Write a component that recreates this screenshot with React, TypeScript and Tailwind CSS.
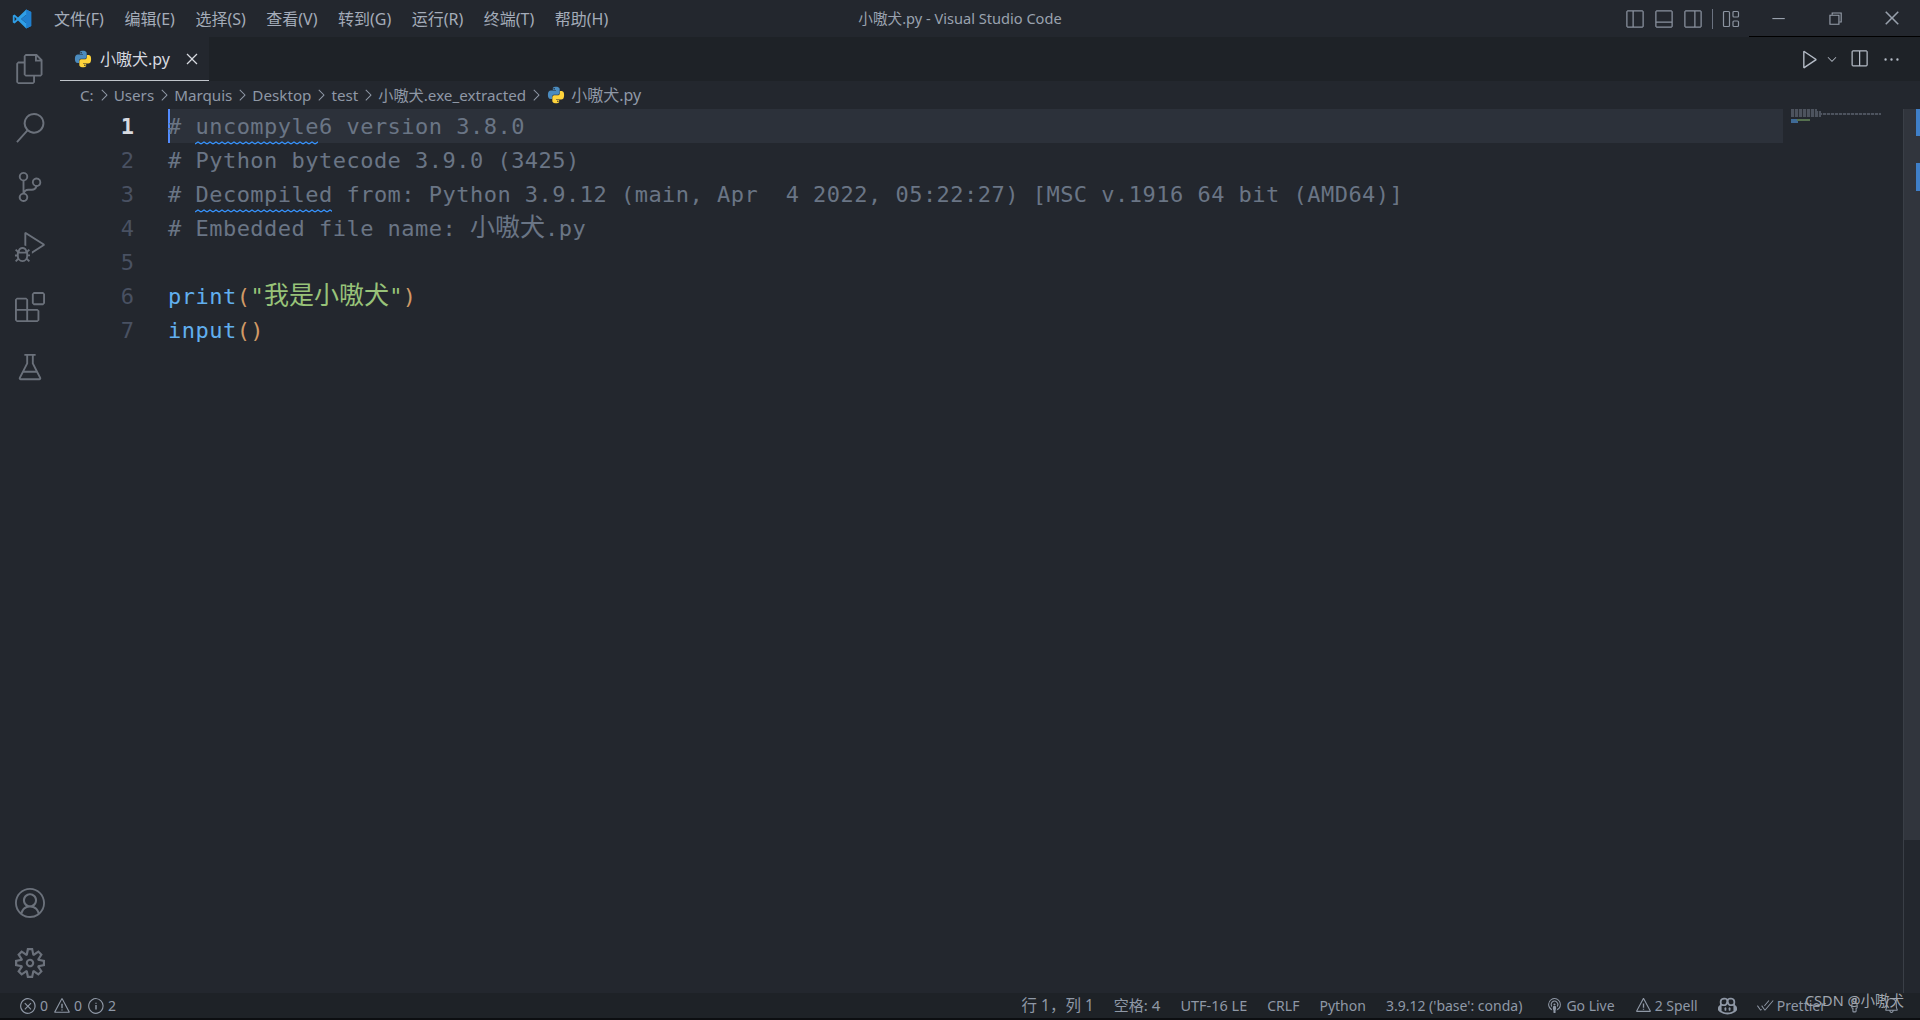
import React from "react";
import {
  VscAccount,
  VscBeaker,
  VscBell,
  VscBroadcast,
  VscCheckAll,
  VscChevronDown,
  VscChevronRight,
  VscChromeClose,
  VscChromeMinimize,
  VscChromeRestore,
  VscClose,
  VscCopilot,
  VscDebugAlt,
  VscEllipsis,
  VscError,
  VscExtensions,
  VscFiles,
  VscInfo,
  VscLayoutPanelOff,
  VscLayoutSidebarLeftOff,
  VscLayoutSidebarRightOff,
  VscPerson,
  VscPlay,
  VscSearch,
  VscSettingsGear,
  VscSourceControl,
  VscSplitHorizontal,
  VscWarning,
} from "react-icons/vsc";

const UI_FONT = "font-['Noto_Sans','Noto_Sans_CJK_SC',sans-serif]";
const CODE_FONT = "font-['DejaVu_Sans_Mono','Noto_Sans_CJK_SC',monospace]";

const menus = ["文件(F)", "编辑(E)", "选择(S)", "查看(V)", "转到(G)", "运行(R)", "终端(T)", "帮助(H)"];
const crumbs = ["C:", "Users", "Marquis", "Desktop", "test", "小嗷犬.exe_extracted"];

function VSCodeLogo() {
  return (
    <svg viewBox="0 0 100 100" className="h-[20px] w-[20px]">
      <path d="M71 3 L96 15 V85 L71 97 L30 58 L13 72 L4 67 V33 L13 28 L30 42 Z M71 29 L46 50 L71 71 Z M13 39 V61 L23 50 Z" fill="#2f9fe8" fillRule="evenodd" />
      <path d="M71 3 L96 15 V85 L71 97 Z M71 29 V71 L46 50 Z" fill="#1f7fd0" fillRule="evenodd" />
    </svg>
  );
}

function PythonIcon() {
  return (
    <svg viewBox="0 0 24 24" className="h-[18px] w-[18px]">
      <path d="M11.9 1C7.5 1 7.8 3 7.8 3v2.3h4.2V6H5.100C3 6 1.200 7.300 1.200 11.700c0 4.400 1.800 5.500 3.600 5.500h2v-2.500s-.1-3 3-3h4.300s2.800 0 2.800-2.800V3.800S16.400 1 11.900 1zM9.500 2.600a1 1 0 1 1 0 2 1 1 0 0 1 0-2z" fill="#4b8bbe" />
      <path d="M12.100 23c4.400 0 4.100-2 4.100-2v-2.300H12V18h6.900c2.100 0 3.900-1.300 3.900-5.700 0-4.400-1.800-5.500-3.600-5.500h-2v2.500s.1 3-3 3H9.900s-2.800 0-2.800 2.800v5.100S7.600 23 12.100 23zm2.400-1.600a1 1 0 1 1 0-2 1 1 0 0 1 0 2z" fill="#ffd43b" />
    </svg>
  );
}

function Squiggle({ width }: { width: number }) {
  return (
    <svg className="absolute left-0 top-[27px] h-[4px]" width={width} viewBox={`0 0 ${width} 4`}>
      <path
        d={Array.from({ length: Math.ceil(width / 6) }, (_, i) => `M${i * 6} 3 L${i * 6 + 3} 1 L${i * 6 + 6} 3`).join(" ")}
        fill="none"
        stroke="#3794ff"
        strokeWidth="1.3"
      />
    </svg>
  );
}

// CJK glyphs in the editor run bigger than the latin cell
function Cjk({ children }: { children: React.ReactNode }) {
  return <span className="text-[25px] leading-[30px] tracking-normal">{children}</span>;
}

const miniLine = "h-[2px] bg-[repeating-linear-gradient(90deg,#4d535e_0,#4d535e_3px,#2a2e35_3px,#2a2e35_4px)]";

function Minimap() {
  return (
    <div className="flex w-[120px] shrink-0 flex-col pl-[8px]">
      <div className={`${miniLine} w-[26px]`} />
      <div className={`${miniLine} w-[30px]`} />
      <div className={`${miniLine} w-[90px]`} />
      <div className={`${miniLine} w-[30px]`} />
      <div className="h-[2px] w-0" />
      <div className="flex h-[2px] w-[19px] bg-[#3f6a96]">
        <div className="ml-[6px] h-[2px] w-[13px] bg-[#55704f]" />
      </div>
      <div className="h-[2px] w-[7px] bg-[#3f6a96]" />
    </div>
  );
}

const lineNumbers = [1, 2, 3, 4, 5, 6, 7];

export default function App() {
  return (
    <div className={`flex h-[1020px] w-[1920px] flex-col overflow-hidden bg-[#23272e] ${UI_FONT}`}>
      {/* title bar */}
      <div className="relative flex h-[37px] shrink-0 items-center bg-[#23272e] text-[16px] text-[#a4acb9]">
        <div className="flex w-[43px] shrink-0 justify-center pl-[1px]">
          <VSCodeLogo />
        </div>
        <div className="flex gap-[20.5px] pl-[11px]">
          {menus.map((m) => (
            <span key={m}>{m}</span>
          ))}
        </div>
        <div className="absolute left-0 right-0 top-[8px] text-center text-[14.6px] leading-[20px] text-[#9aa2af]">小嗷犬.py - Visual Studio Code</div>
        <div className="ml-auto flex items-center">
          <div className="flex items-center gap-[9px] text-[#8b93a0]">
            <VscLayoutSidebarLeftOff size={20} />
            <VscLayoutPanelOff size={20} />
            <VscLayoutSidebarRightOff size={20} />
            <div className="h-[20px] w-[1px] bg-[#6b7280]" />
            <svg viewBox="0 0 18 18" className="h-[18px] w-[18px]" fill="none" stroke="currentColor" strokeWidth="1.2">
              <rect x="1.500" y="1.500" width="6" height="15" rx="1" />
              <rect x="11" y="1.500" width="5.500" height="5.500" rx="1" />
              <rect x="11" y="11" width="5.500" height="5.500" rx="1" />
            </svg>
          </div>
          <div className="ml-[9px] flex h-[37px] w-[171px] items-center border-b border-black text-[#98a0ac]">
            <div className="flex w-[57px] justify-center"><VscChromeMinimize size={18} /></div>
            <div className="flex w-[57px] justify-center"><VscChromeRestore size={18} /></div>
            <div className="flex w-[57px] justify-center"><VscChromeClose size={20} /></div>
          </div>
        </div>
      </div>

      <div className="flex min-h-0 flex-1">
        {/* activity bar */}
        <div className="flex w-[60px] shrink-0 flex-col items-center justify-between bg-[#23272e] text-[#6b717b]">
          <div className="flex flex-col items-center gap-[30px] pt-[17px]">
            <VscFiles size={30} />
            <VscSearch size={30} className="-mt-[1px]" />
            <VscSourceControl size={30} className="-mt-[1px]" />
            <VscDebugAlt size={30} />
            <VscExtensions size={30} />
            <VscBeaker size={30} />
          </div>
          <div className="flex flex-col items-center gap-[30px] pb-[15px]">
            <VscAccount size={30} />
            <VscSettingsGear size={30} />
          </div>
        </div>

        <div className="flex min-w-0 flex-1 flex-col">
          {/* tabs */}
          <div className="flex h-[44px] shrink-0 items-center bg-[#1e2227]">
            <div className="flex h-full w-[149px] items-center gap-[7px] border-b border-[#c0c4ca] bg-[#23272e] pl-[14px] text-[16px] text-[#d7dae0]">
              <PythonIcon />
              <span className="ml-[1px]">小嗷犬.py</span>
              <VscClose size={20} className="ml-[5px] text-[#d7dae0]" />
            </div>
            <div className="ml-auto flex items-center pr-[19px] text-[#b4bbc6]">
              <VscPlay size={22} />
              <VscChevronDown size={14} className="ml-[4px]" />
              <VscSplitHorizontal size={20} className="ml-[10px]" />
              <VscEllipsis size={19} className="ml-[13px]" />
            </div>
          </div>

          {/* breadcrumbs */}
          <div className="flex h-[28px] shrink-0 items-center pl-[20px] text-[15.2px] text-[#8f98a6]">
            {crumbs.map((c) => (
              <React.Fragment key={c}>
                <span>{c}</span>
                <VscChevronRight size={18} className="mx-[1px]" />
              </React.Fragment>
            ))}
            <span className="ml-[1px] mr-[5px]"><PythonIcon /></span>
            <span className="ml-[1px] text-[16px]">小嗷犬.py</span>
          </div>

          {/* editor */}
          <div className="flex min-h-0 flex-1">
            <div className="w-[75px] shrink-0">
              {lineNumbers.map((n) => (
                <div key={n} className={`h-[34px] pr-[1px] text-right text-[22px] leading-[35px] ${CODE_FONT} ${n === 1 ? "font-bold text-[#d7dae0]" : "text-[#495162]"}`}>
                  {n}
                </div>
              ))}
            </div>
            <div className={`min-w-0 flex-1 pl-[33px] text-[22px] leading-[35px] tracking-[0.48px] whitespace-pre text-[#6a7585] ${CODE_FONT}`}>
              <div className="relative -ml-[33px] h-[34px] pl-[33px]">
                <div className="absolute inset-y-0 left-[33px] right-0 bg-[#2c313a]" />
                <div className="absolute left-[33px] top-0 h-[34px] w-[2px] bg-[#528bff]" />
                <span className="relative"># </span>
                <span className="relative">
                  uncompyle6
                  <Squiggle width={123} />
                </span>
                <span className="relative"> version 3.8.0</span>
              </div>
              <div className="h-[34px]"># Python bytecode 3.9.0 (3425)</div>
              <div className="h-[34px]">
                <span># </span>
                <span className="relative">
                  Decompiled
                  <Squiggle width={137} />
                </span>
                <span> from: Python 3.9.12 (main, Apr  4 2022, 05:22:27) [MSC v.1916 64 bit (AMD64)]</span>
              </div>
              <div className="h-[34px]"># Embedded file name: <Cjk>小嗷犬</Cjk>.py</div>
              <div className="h-[34px]" />
              <div className="h-[34px]">
                <span className="text-[#61afef]">print</span>
                <span className="text-[#d19a66]">(</span>
                <span className="text-[#98c379]">"<Cjk>我是小嗷犬</Cjk>"</span>
                <span className="text-[#d19a66]">)</span>
              </div>
              <div className="h-[34px]">
                <span className="text-[#61afef]">input</span>
                <span className="text-[#d19a66]">()</span>
              </div>
            </div>
            <Minimap />
            <div className="flex w-[17px] shrink-0 flex-col border-l border-[#3a3f47]">
              <div className="relative h-[731px] bg-[#31353d]">
                <div className="absolute right-0 top-0 h-[27px] w-[4px] bg-[#3f7fc8]" />
                <div className="absolute right-0 top-[54px] h-[28px] w-[4px] bg-[#3f7fc8]" />
              </div>
            </div>
          </div>
        </div>
      </div>

      {/* status bar */}
      <div className="relative flex h-[27px] shrink-0 items-center border-b-2 border-[#0c0e11] bg-[#1e2227] pl-[19px] text-[14px] text-[#8f98a6]">
        <div className="flex items-center gap-[3px]">
          <VscError size={18} />
          <span className="mr-[2px]">0</span>
          <VscWarning size={18} />
          <span className="mr-[2px]">0</span>
          <VscInfo size={18} />
          <span>2</span>
        </div>
        <div className="ml-auto flex items-center gap-[20px] pr-[20px]">
          <span className="text-[15.5px]">行 1，列 1</span>
          <span className="text-[15px]">空格: 4</span>
          <span className="text-[14.5px]">UTF-16 LE</span>
          <span>CRLF</span>
          <span>Python</span>
          <span>3.9.12 ('base': conda)</span>
          <span className="ml-[4px] flex items-center gap-[3px]"><VscBroadcast size={17} />Go Live</span>
          <span className="flex items-center gap-[3px]"><VscWarning size={17} />2 Spell</span>
          <VscCopilot size={19} />
          <span className="flex items-center gap-[3px]"><VscCheckAll size={17} />Prettier</span>
          <VscPerson size={17} />
          <VscBell size={17} />
        </div>
        <span className="absolute right-[16px] -top-[3px] text-[14.5px] text-[#a0a6af]">CSDN @小嗷犬</span>
      </div>
    </div>
  );
}
